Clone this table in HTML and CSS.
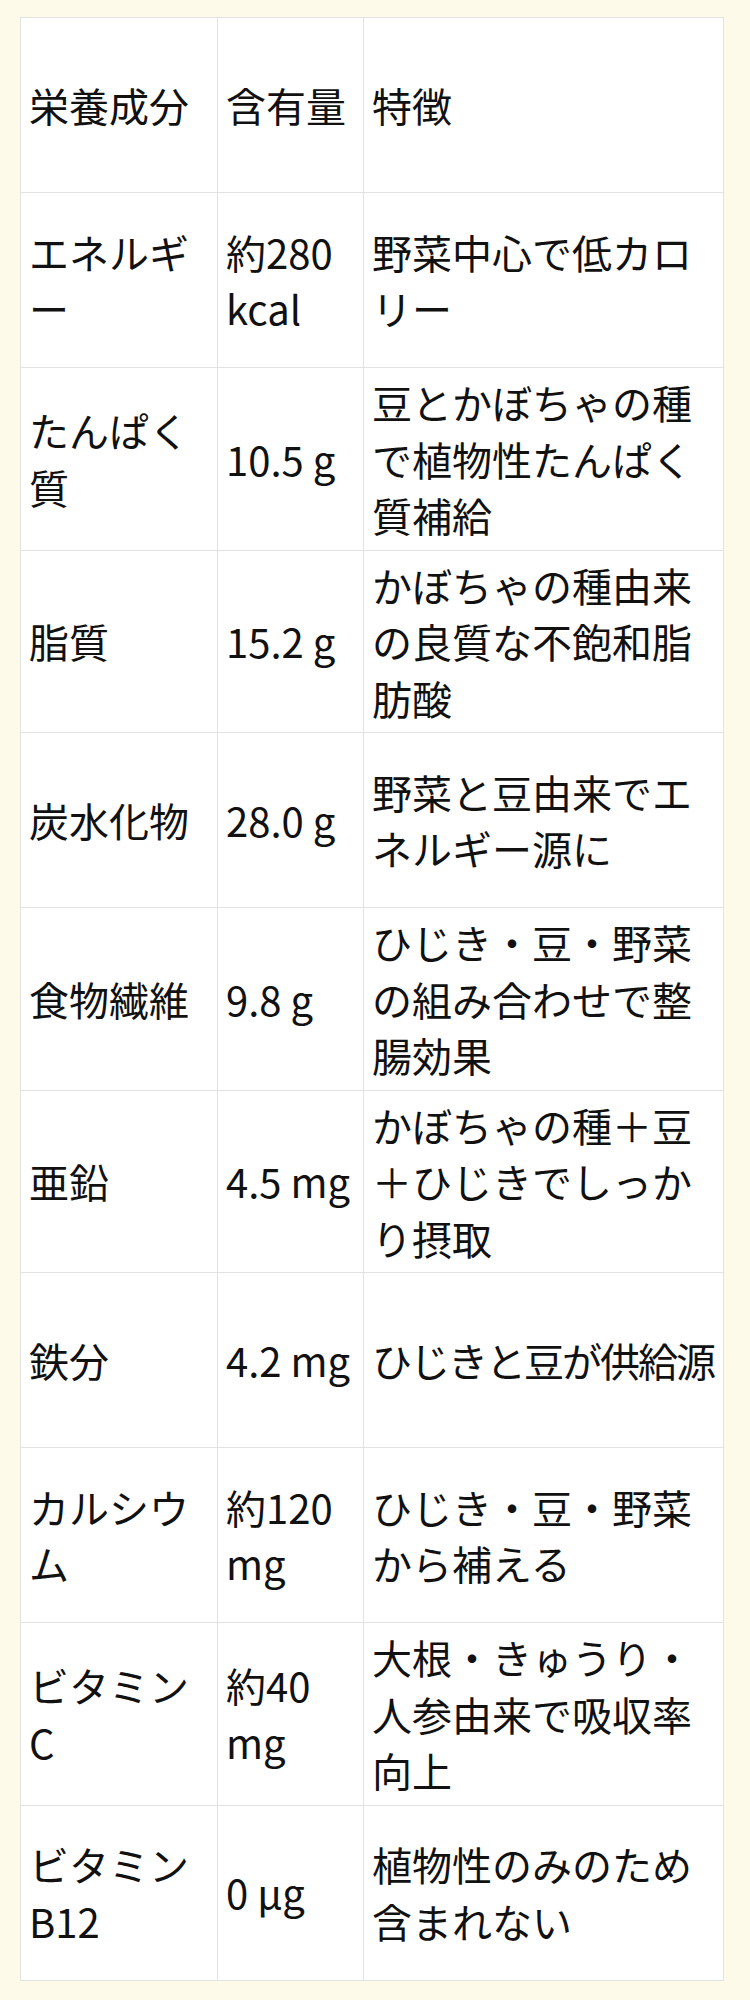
FILE: index.html
```html
<!DOCTYPE html>
<html lang="ja">
<head>
<meta charset="utf-8">
<title>栄養成分</title>
<link rel="stylesheet" href="styles.css">
</head>
<body>
<div class="page">
<table class="nutri">
<colgroup>
<col class="c1">
<col class="c2">
<col class="c3">
</colgroup>
<thead>
<tr><th>栄養成分</th><th>含有量</th><th>特徴</th></tr>
</thead>
<tbody>
<tr><td>エネルギー</td><td>約280 kcal</td><td>野菜中心で低カロリー</td></tr>
<tr><td>たんぱく質</td><td>10.5 g</td><td>豆とかぼちゃの種で植物性たんぱく質補給</td></tr>
<tr><td>脂質</td><td>15.2 g</td><td>かぼちゃの種由来の良質な不飽和脂肪酸</td></tr>
<tr><td>炭水化物</td><td>28.0 g</td><td>野菜と豆由来でエネルギー源に</td></tr>
<tr><td>食物繊維</td><td>9.8 g</td><td>ひじき・豆・野菜の組み合わせで整腸効果</td></tr>
<tr><td>亜鉛</td><td>4.5 mg</td><td>かぼちゃの種＋豆＋ひじきでしっかり摂取</td></tr>
<tr><td>鉄分</td><td>4.2 mg</td><td class="tight">ひじきと豆が供給源</td></tr>
<tr><td>カルシウム</td><td>約120 mg</td><td>ひじき・豆・野菜から補える</td></tr>
<tr><td>ビタミンC</td><td>約40 mg</td><td>大根・きゅうり・人参由来で吸収率向上</td></tr>
<tr><td>ビタミンB12</td><td>0 µg</td><td>植物性のみのため含まれない</td></tr>
</tbody>
</table>
</div>
</body>
</html>
```

FILE: styles.css
```css
html, body {
  margin: 0;
  padding: 0;
  background: #fdfaea;
}
body {
  font-family: "Noto Sans CJK JP", "Noto Sans", sans-serif;
  color: #111;
}
.page {
  padding: 17px 27px 19px 20px;
}
.nutri {
  width: 100%;
  table-layout: fixed;
  border-collapse: collapse;
  background: #fff;
  font-size: 40px;
  line-height: 56.5px;
}
.c1 { width: 197px; }
.c2 { width: 146px; }
.c3 { width: 360px; }
.nutri th,
.nutri td {
  border: 1px solid #e2e2e2;
  padding: 6px 8px;
  height: 175px;
  box-sizing: border-box;
  text-align: left;
  vertical-align: middle;
  font-weight: normal;
}
.nutri td.tight {
  letter-spacing: -2px;
  white-space: nowrap;
}
```
